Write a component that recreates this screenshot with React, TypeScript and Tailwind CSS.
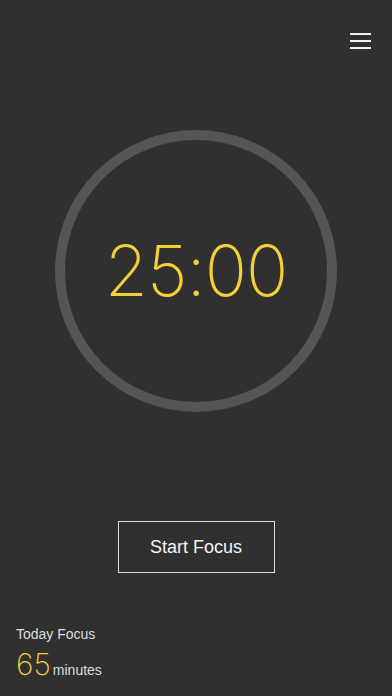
import React from 'react';

const App: React.FC = () => {
  return (
    <div className="w-full h-[696px] bg-[#303030] flex flex-col overflow-hidden" style={{ fontFamily: '"Liberation Sans", Arial, sans-serif' }}>
      {/* Header */}
      <div className="flex justify-end pt-[33px] pr-[21px]">
        <button className="w-[21px] h-[16px] flex flex-col justify-between">
          <span className="block h-[2px] w-full bg-[#f2f2f2]" />
          <span className="block h-[2px] w-full bg-[#f2f2f2]" />
          <span className="block h-[2px] w-full bg-[#f2f2f2]" />
        </button>
      </div>

      {/* Timer ring */}
      <div className="mt-[81px] mx-auto w-[282px] h-[282px] rounded-full border-[10px] border-[#555555] flex items-center justify-center">
        <span className="text-[#f4cf35] text-[70px] leading-none font-extralight tracking-[-1px]" style={{ fontFamily: 'Inter, "Liberation Sans", sans-serif' }}>
          25:00
        </span>
      </div>

      {/* Start button */}
      <div className="mt-[109px] flex justify-center">
        <button className="w-[157px] h-[52px] border border-[#dcdcdc] text-[#f5f5f5] text-[18px]">
          Start Focus
        </button>
      </div>

      {/* Today stats */}
      <div className="mt-auto pl-[16px] pb-[15px]">
        <div className="text-[#dddddd] text-[14px] leading-none">Today Focus</div>
        <div className="flex items-baseline mt-[8px]">
          <span className="text-[#f4cf35] text-[30px] leading-none font-extralight" style={{ fontFamily: 'Inter, "Liberation Sans", sans-serif' }}>65</span>
          <span className="text-[#dddddd] text-[14px] ml-[2px]">minutes</span>
        </div>
      </div>
    </div>
  );
};

export default App;
